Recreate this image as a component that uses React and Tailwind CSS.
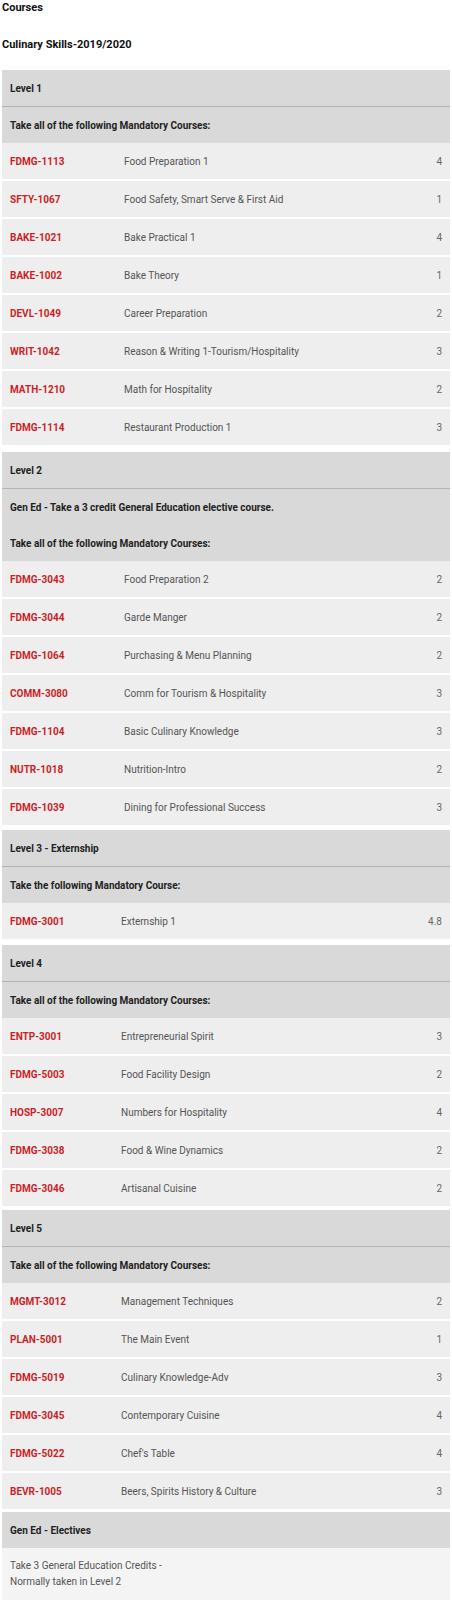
import React from "react";

const sections = [
  {
    title: "Level 1",
    col: "grid-cols-[114px_1fr_auto]",
    mb: "mb-[7px]",
    subs: ["Take all of the following Mandatory Courses:"],
    rows: [
      ["FDMG-1113", "Food Preparation 1", "4"],
      ["SFTY-1067", "Food Safety, Smart Serve & First Aid", "1"],
      ["BAKE-1021", "Bake Practical 1", "4"],
      ["BAKE-1002", "Bake Theory", "1"],
      ["DEVL-1049", "Career Preparation", "2"],
      ["WRIT-1042", "Reason & Writing 1-Tourism/Hospitality", "3"],
      ["MATH-1210", "Math for Hospitality", "2"],
      ["FDMG-1114", "Restaurant Production 1", "3"],
    ],
  },
  {
    title: "Level 2",
    col: "grid-cols-[114px_1fr_auto]",
    mb: "mb-[5px]",
    subs: [
      "Gen Ed - Take a 3 credit General Education elective course.",
      "Take all of the following Mandatory Courses:",
    ],
    rows: [
      ["FDMG-3043", "Food Preparation 2", "2"],
      ["FDMG-3044", "Garde Manger", "2"],
      ["FDMG-1064", "Purchasing & Menu Planning", "2"],
      ["COMM-3080", "Comm for Tourism & Hospitality", "3"],
      ["FDMG-1104", "Basic Culinary Knowledge", "3"],
      ["NUTR-1018", "Nutrition-Intro", "2"],
      ["FDMG-1039", "Dining for Professional Success", "3"],
    ],
  },
  {
    title: "Level 3 - Externship",
    col: "grid-cols-[111px_1fr_auto]",
    mb: "mb-[6px]",
    subs: ["Take the following Mandatory Course:"],
    rows: [["FDMG-3001", "Externship 1", "4.8"]],
  },
  {
    title: "Level 4",
    col: "grid-cols-[111px_1fr_auto]",
    mb: "mb-[4px]",
    subs: ["Take all of the following Mandatory Courses:"],
    rows: [
      ["ENTP-3001", "Entrepreneurial Spirit", "3"],
      ["FDMG-5003", "Food Facility Design", "2"],
      ["HOSP-3007", "Numbers for Hospitality", "4"],
      ["FDMG-3038", "Food & Wine Dynamics", "2"],
      ["FDMG-3046", "Artisanal Cuisine", "2"],
    ],
  },
  {
    title: "Level 5",
    col: "grid-cols-[111px_1fr_auto]",
    mb: "mb-[3px]",
    subs: ["Take all of the following Mandatory Courses:"],
    rows: [
      ["MGMT-3012", "Management Techniques", "2"],
      ["PLAN-5001", "The Main Event", "1"],
      ["FDMG-5019", "Culinary Knowledge-Adv", "3"],
      ["FDMG-3045", "Contemporary Cuisine", "4"],
      ["FDMG-5022", "Chef's Table", "4"],
      ["BEVR-1005", "Beers, Spirits History & Culture", "3"],
    ],
  },
];

function Section({ s }) {
  return (
    <div className={s.mb}>
      <div className="h-[37px] flex items-center pl-2 bg-[#d9d9d9] border-b border-[#b4b4b4] font-bold text-[10px] text-[#222]">
        {s.title}
      </div>
      <div className="bg-[#d9d9d9]">
        {s.subs.map((t) => (
          <div key={t} className="h-9 flex items-center pl-2 font-bold text-[10px] text-[#222]">
            {t}
          </div>
        ))}
      </div>
      <div className="flex flex-col gap-[2px]">
        {s.rows.map((r) => (
          <div key={r[0]} className={`h-9 grid ${s.col} items-center bg-[#eeeeee] pl-2 pr-2 text-[10px]`}>
            <span className="font-bold text-[#cc1f27]">{r[0]}</span>
            <span className="text-[#555]">{r[1]}</span>
            <span className="text-[#666] text-right">{r[2]}</span>
          </div>
        ))}
      </div>
    </div>
  );
}

export default function App() {
  return (
    <div className="w-[452px] bg-white px-[2px] pb-1 font-['Roboto',sans-serif]">
      <div className="h-4 flex items-center font-bold text-[11px] text-[#111]">Courses</div>
      <div className="h-4 mt-[21px] flex items-center font-bold text-[11px] text-[#111]">
        Culinary Skills-2019/2020
      </div>
      <div className="mt-[17px]">
        {sections.map((s) => (
          <Section key={s.title} s={s} />
        ))}
        <div>
          <div className="h-9 flex items-center pl-2 bg-[#d9d9d9] font-bold text-[10px] text-[#222]">
            Gen Ed - Electives
          </div>
          <div className="bg-[#f4f4f4] pl-2 py-[10px] text-[10px] leading-4 text-[#555]">
            <div>Take 3 General Education Credits -</div>
            <div>Normally taken in Level 2</div>
          </div>
        </div>
      </div>
    </div>
  );
}
